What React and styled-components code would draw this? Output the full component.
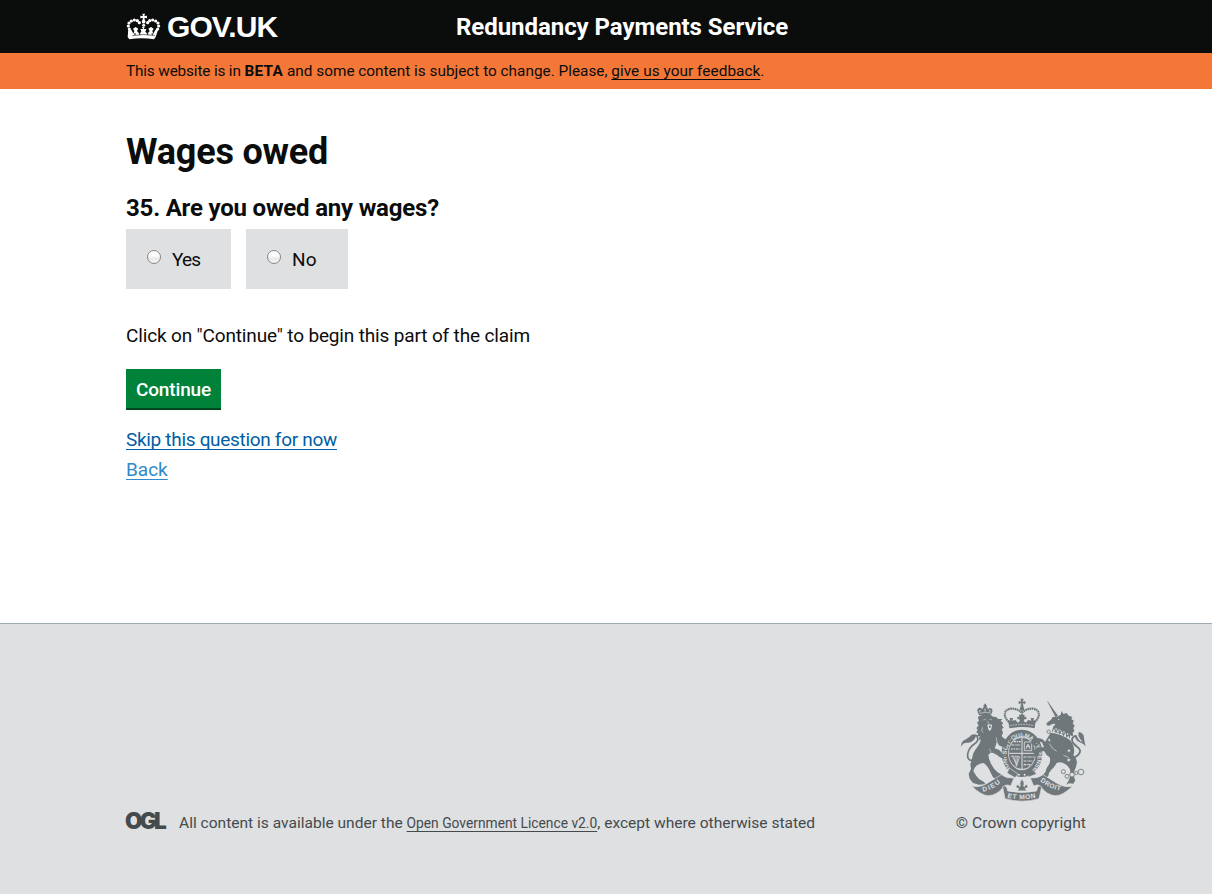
import React from "react";
import styled, { createGlobalStyle } from "styled-components";

const GlobalStyle = createGlobalStyle`
  * { box-sizing: border-box; }
  body { margin: 0; background: #fff; color: #0b0c0c; font-family: Roboto, Arial, sans-serif; font-size: 19px; }
  h1, h2, p { margin: 0; }
`;

const Page = styled.div`
  display: flex;
  flex-direction: column;
  min-height: 894px;
`;
const Container = styled.div`
  width: 960px;
  margin: 0 auto;
`;
const Header = styled.header`
  height: 53px;
  background: #0b0c0c;
  color: #fff;
`;
const HeaderRow = styled(Container)`
  display: grid;
  grid-template-columns: 330px 1fr;
  align-items: center;
  height: 53px;
`;
const Brand = styled.a`
  display: flex;
  align-items: center;
  gap: 6px;
  color: #fff;
`;
const Wordmark = styled.span`
  font: bold 30px/34px "Liberation Sans", Arial, sans-serif;
  letter-spacing: -0.9px;
`;
const ServiceName = styled.span`
  font-size: 24px;
  line-height: 30px;
  font-weight: 700;
  letter-spacing: -0.05px;
  white-space: nowrap;
`;
const BetaBanner = styled.div`
  height: 36px;
  background: #f47738;
  font-size: 15.35px;
  line-height: 37px;
  white-space: nowrap;
`;
const BetaIntro = styled.span`
  letter-spacing: -0.16px;
`;
const BetaTag = styled.strong`
  letter-spacing: 0.3px;
`;
const TextLink = styled.a`
  color: ${(p) => p.$color || "inherit"};
  font-size: ${(p) => p.$size || "inherit"};
  letter-spacing: ${(p) => p.$tracking || "inherit"};
  text-decoration: underline;
  text-decoration-thickness: 1px;
  text-underline-offset: 3px;
  text-decoration-skip-ink: none;
`;
const Main = styled.main`
  flex: 1;
  padding-top: 43px;
`;
const Title = styled.h1`
  font-size: 36px;
  line-height: 40px;
  letter-spacing: -0.2px;
`;
const Question = styled.h2`
  margin-top: 21px;
  font-size: 24px;
  line-height: 30px;
  letter-spacing: -0.2px;
`;
const Options = styled.div`
  display: flex;
  gap: 15px;
  margin-top: 6px;
`;
const Option = styled.label`
  display: flex;
  align-items: center;
  width: ${(p) => p.$width};
  height: 60px;
  padding-left: 21px;
  background: #dee0e2;
  letter-spacing: ${(p) => p.$tracking};
`;
const Radio = styled.input`
  appearance: none;
  width: 14px;
  height: 14px;
  margin: -4px 11px 0 0;
  border: 1px solid #858585;
  border-radius: 50%;
  background: linear-gradient(#fff, #fdfdfd 40%, #e8e8e8 60%, #f8f8f8);
`;
const Hint = styled.p`
  margin-top: 34px;
  line-height: 25px;
  letter-spacing: -0.15px;
`;
const Button = styled.button`
  display: block;
  width: 95px;
  height: 39px;
  margin: 21px 0 0;
  padding: 10px 0 8px;
  border: 0;
  background: #00823b;
  box-shadow: 0 2px 0 #00491f;
  color: #fff;
  font: 500 19px/21px Roboto, Arial, sans-serif;
  letter-spacing: -0.15px;
  white-space: nowrap;
`;
const Links = styled.div`
  display: flex;
  flex-direction: column;
  align-items: flex-start;
  margin-top: 17px;
  line-height: 30px;
`;
const Footer = styled.footer`
  height: 271px;
  padding-top: 74px;
  border-top: 1px solid #a1acb2;
  background: #dee0e2;
  color: #454a4c;
  font-size: 15.55px;
  line-height: 20px;
`;
const FooterRow = styled(Container)`
  display: flex;
  justify-content: space-between;
  align-items: flex-end;
`;
const Licence = styled.div`
  display: flex;
  align-items: flex-end;
  white-space: nowrap;
`;
const OglMark = styled.span`
  width: 54px;
  margin-left: -1px;
  font: 900 22.5px/24px Inter, Arial, sans-serif;
  letter-spacing: -2.7px;
`;
const Copyright = styled.div`
  display: flex;
  flex-direction: column;
  align-items: flex-end;
  gap: 11px;
  letter-spacing: 0.09px;
  white-space: nowrap;
`;

function CrownIcon() {
  const dots = [[40,84],[37,75],[39,66],[46,60],[55,57],[64,59],[70,65],[95,65],[101,59],[110,57],[119,60],[126,66],[128,75],[125,84]];
  return (
    <svg width="35" height="27" viewBox="30 36 105 81" fill="#fff" aria-hidden="true">
      {dots.map(([x, y]) => <circle key={x + "-" + y} cx={x} cy={y} r="4.8" />)}
      <path d="M79 38h8l-2 7 8-1v8l-8-1 2 8h-8l2-8-8 1v-8l8 1z" />
      <circle cx="83" cy="62" r="5.5" />
      <circle cx="83" cy="73" r="4.5" />
      <path d="M37 84l9 2 6 12 3-8-4-7 8-5 8 5-4 7 7 8 6-6-3-8h8l-3-6h8l-3 6h8l-3 8 6 6 7-8-4-7 8-5 8 5-4 7 3 8 6-12 9-2-8 24-5 7q-37-7-74 0l-5-7z" />
      <path d="M49 104q34-7 68 0" fill="none" stroke="#0b0c0c" strokeWidth="1.6" />
      <g fill="#0b0c0c"><circle cx="57" cy="99" r="2.6" /><circle cx="71" cy="99" r="2.6" /><circle cx="95" cy="99" r="2.6" /><circle cx="109" cy="99" r="2.6" /></g>
    </svg>
  );
}

const INK = "#6f777b";
const PAPER = "#dee0e2";

function RoyalArms() {
  return (
    <svg width="126" height="104" viewBox="30 24 378 312" fill={INK} aria-label="Royal coat of arms">
      <defs>
        <path id="garter" d="M181 244A52 62 0 1 1 251 244" />
        <path id="dieu" d="M99 305Q130 299 155 275" />
        <path id="etmon" d="M172 323Q216 333 262 322" />
        <path id="droit" d="M270 273Q300 298 336 303" />
      </defs>

      {/* garter and shield */}
      <ellipse cx="216" cy="190" rx="62" ry="73" fill={PAPER} />
      <ellipse cx="216" cy="190" rx="51" ry="61" fill="none" stroke={INK} strokeWidth="20" />
      <text fill={PAPER} fontFamily="Liberation Sans, sans-serif" fontWeight="700" fontSize="18" dy="5">
        <textPath href="#garter" textLength="278">HONI·SOIT·QUI·MAL·Y·PENSE</textPath>
      </text>
      <path d="M178 234l26 18-9 11-24-14zM247 238l13 14-26 10" stroke={PAPER} strokeWidth="2" />
      <circle cx="207" cy="254" r="3" fill={PAPER} /><circle cx="224" cy="254" r="3" fill={PAPER} />
      <ellipse cx="216" cy="190" rx="41" ry="48" stroke={PAPER} strokeWidth="2" />
      <path d="M216 143v94M177 190h78" stroke={PAPER} strokeWidth="3" />
      <path d="M185 165h27M183 177h29M192 155h20M221 201h31M221 213h29M221 224h20" stroke={PAPER} strokeWidth="3.6" strokeDasharray="7 2 3 2" />
      <path d="M223 156h22v26h-22z" fill="none" stroke={PAPER} strokeWidth="2.4" />
      <path d="M228 177l6-15 6 15M228 169h13" fill="none" stroke={PAPER} strokeWidth="2.4" />
      <path d="M184 198l25 2-10 29q0-19-15-31M191 200l4 17M198 200v24M204 201l-4 24" fill="none" stroke={PAPER} strokeWidth="2.2" />

      {/* lion */}
      <path d="M87 75q-9-16-2-20 7-4 12 3 1-6 5-7l-3-5h4v-5h5v5h4l-3 5q4 1 5 7 6-7 11-2 6 5-3 19z" />
      <path d="M92 61q-5-1-3 6M117 60q5 0 3 6M105 56v9" fill="none" stroke={PAPER} strokeWidth="2.4" />
      <path d="M89 70q17-5 34-1" fill="none" stroke={PAPER} strokeWidth="1.8" />
      <path d="M86 78q20-6 38-2l5 4 9 1 7 6 12 0-5 6 8 6-5 5 6 9-6 4 4 11-4 10q5 8 12 10l8 2-5 19-6 4-15-6-10-10q0 10-5 18l14 5 12 14 3 14-13-6-10-8-12-6q-9 0-13 6 1 14 8 27 8 16 20 26l17 10 4 8-12-1-12 5-11-7-7-14q-8-20-21-29-12 0-22 8-8 8-9 16l9 15 8 9 14 8 6 8-20 1-18-5-10-13-3-14 7-15-2-14 5-17q3-20 14-32 10-12 13-26l-7 3 3-13-8 2 4-11-6 0 4-11-4-3 7-9-5-8 6-6-3-8z" />
      <path d="M100 90q5-3 9 0M118 88q5-1 8 2M114 93l1 12" fill="none" stroke={PAPER} strokeWidth="1.4" />
      <path d="M112 105q9-4 14 0-1 15-7 18-6-5-7-18z" fill={PAPER} />
      <path d="M116 107h7l-2 7h-3z" />
      <path d="M139 142q0 12 5 20M118 176q6 8 5 16M98 112l-3 9 4 7" fill="none" stroke={PAPER} strokeWidth="1.8" />
      <path d="M34 171q-3-17 14-23 10-5 15-12 9-7 20 0-8 3-9 11-9 12-22 11-14-1-18 13z" />
      <path d="M80 137q8 12-2 21-12 7-19 18-10 18-4 30 7 9 17 2" fill="none" stroke={INK} strokeWidth="5" />

      {/* unicorn */}
      <path d="M291 33l3 2 30 42-7 5z" />
      <path d="M322 80l10-6 3-11 5 9 10-3 6 8 11 4-3 6 8 6-4 6 6 9-4 6 3 9-5 5 2 9-8 2-18-4-20-7-16-5 4-13 4-9-9 1-9 5-8-1 0-7 13-10 5-8z" />
      <path d="M308 118q28 4 58 26" fill="none" stroke={PAPER} strokeWidth="9" />
      <path d="M307 124l5-14 6 16 7-14 4 18 8-13 3 18 9-12 1 17 9-8-1 12" fill="none" stroke={INK} strokeWidth="3.4" />
      <path d="M302 128q30 3 57 21 12 13 13 28 2 9-2 17 10 12 11 23-2 15-8 26-3 17 3 28l-6 10-13-1-8 4 8-15q6-13 3-31-6-13-22-20-12-3-18 1-8 15-16 20-9 9-9 18-5 8-11 13l-16-3 10-11 8-9q2-13 10-22 7-11 3-23-11-6-17-19-10 1-15 5-3 11-10 13-8-10-7-17 12-14 32-12l-6-15q-12-3-17 0-4 8-7 10-10-4-9-12 3-10 14-11 22-1 28 12z" />
      <path d="M298 161q8 16 22 23M340 196q16 3 23 14" fill="none" stroke={PAPER} strokeWidth="2" />
      <circle cx="326" cy="88" r="2" fill={PAPER} />
      <path d="M407 169q-5-8-14-11-15-5-18-18-1-6 5-4 5 18 18 20l-8-10q-8-12-3-20 15 2 15 19 1 10 5 24z" />
      <path d="M377 137q-16 7-9 20 6 8 14 14 15 10 3 23-10 8-14 9" fill="none" stroke={INK} strokeWidth="5.5" />
      <g fill={PAPER} stroke={INK} strokeWidth="2.6">
        <circle cx="296" cy="125" r="5" /><circle cx="298" cy="150" r="4.5" /><circle cx="340" cy="245" r="6" /><circle cx="351" cy="259" r="6" /><circle cx="366" cy="254" r="7" /><circle cx="379" cy="249" r="5" /><circle cx="393" cy="246" r="8.5" />
        <circle cx="356" cy="210" r="5.5" /><circle cx="357" cy="182" r="5" />
      </g>

      {/* crown */}
      <path d="M211 26h10l-3 9 8-2v9l-8-2 3 10h-10l3-10-8 2v-9l8 2z" />
      <circle cx="216" cy="56" r="6.5" />
      <path d="M177 96C158 80 161 58 183 56q18-1 31 11M254 96c19-16 16-38-6-40q-18-1-31 11" fill="none" stroke={INK} strokeWidth="6.5" strokeDasharray="5 1.5" />
      <path d="M216 64v37" stroke={INK} strokeWidth="5" strokeDasharray="5 1.5" />
      <path d="M174 90l7 2-2-8h10l-2 8 10-2 6 8 7-5-3-6-5 1v-8l6 1-1-7h17l-1 7 6-1v8l-5-1-3 6 7 5 6-8 10 2-2-8h10l-2 8 7-2-3 25q-38-8-76 0z" />
      <path d="M180 107q36-8 72 0" fill="none" stroke={PAPER} strokeWidth="2.2" strokeDasharray="5 3" />

      {/* ribbons and motto */}
      <path d="M64 287q22 9 51-9l39-24q9 6 19 9l19 1-10 24q-14-7-21 2-20 26-44 27-22 1-53-30z" stroke={PAPER} strokeWidth="2" />
      <path d="M369 287q-22 9-51-9l-39-24q-9 6-19 9l-19 1 10 24q14-7 21 2 20 26 44 27 22 1 53-30z" stroke={PAPER} strokeWidth="2" />
      <path d="M158 290q12-8 15 13 43 9 87 0 3-21 15-13l-8 36q-51 15-102 0z" stroke={PAPER} strokeWidth="2" />
      <path d="M216 268q-9 12-4 20l-4 2q-2-8-7-5-6 9 6 10l-4 7h26l-4-7q12-1 6-10-5-3-7 5l-4-2q5-8-4-20z" stroke={PAPER} strokeWidth="1" />
      <g fill={PAPER} fontFamily="Liberation Sans, sans-serif" fontWeight="700" fontSize="20">
        <text><textPath href="#dieu" textLength="60">DIEU</textPath></text>
        <text><textPath href="#etmon" textLength="86">ET MON</textPath></text>
        <text><textPath href="#droit" textLength="68">DROIT</textPath></text>
      </g>
    </svg>
  );
}

export default function App() {
  return (
    <Page>
      <GlobalStyle />
      <Header>
        <HeaderRow>
          <Brand><CrownIcon /><Wordmark>GOV.UK</Wordmark></Brand>
          <ServiceName>Redundancy Payments Service</ServiceName>
        </HeaderRow>
      </Header>
      <BetaBanner>
        <Container><BetaIntro>This website is in </BetaIntro><BetaTag>BETA</BetaTag> and some content is subject to change. Please, <TextLink $tracking="0.05px">give us your feedback</TextLink>.</Container>
      </BetaBanner>
      <Main>
        <Container>
          <Title>Wages owed</Title>
          <Question>35. Are you owed any wages?</Question>
          <Options>
            <Option $width="105px" $tracking="-0.8px"><Radio type="radio" name="owed" />Yes</Option>
            <Option $width="102px" $tracking="0.2px"><Radio type="radio" name="owed" />No</Option>
          </Options>
          <Hint>Click on "Continue" to begin this part of the claim</Hint>
          <Button>Continue</Button>
          <Links>
            <TextLink $color="#005ea5" $tracking="-0.31px">Skip this question for now</TextLink>
            <TextLink $color="#2e8aca">Back</TextLink>
          </Links>
        </Container>
      </Main>
      <Footer>
        <FooterRow>
          <Licence>
            <OglMark>OGL</OglMark>
            <p>All content is available under the <TextLink $size="13.8px">Open Government Licence v2.0</TextLink>, except where otherwise stated</p>
          </Licence>
          <Copyright><RoyalArms /><span>© Crown copyright</span></Copyright>
        </FooterRow>
      </Footer>
    </Page>
  );
}
